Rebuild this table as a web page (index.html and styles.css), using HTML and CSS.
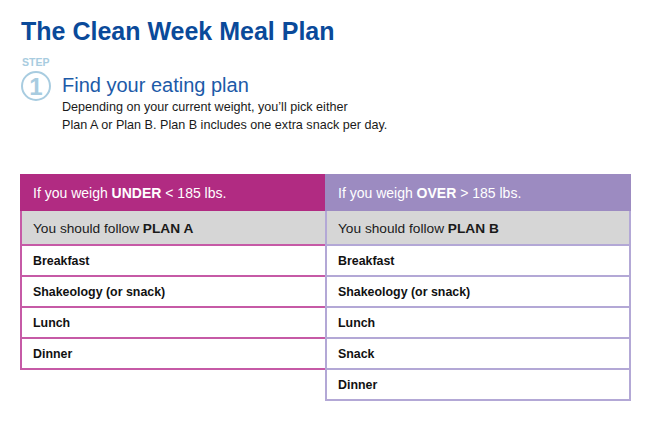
FILE: index.html
```html
<!DOCTYPE html>
<html>
<head>
<meta charset="utf-8">
<link rel="stylesheet" href="styles.css">
</head>
<body>
<div class="page">
  <h1 class="title">The Clean Week Meal Plan</h1>
  <div class="step">
    <div class="step-badge">
      <div class="step-label">STEP</div>
      <div class="step-circle">1</div>
    </div>
    <div class="step-body">
      <h2 class="step-title">Find your eating plan</h2>
      <p class="step-text">Depending on your current weight, you’ll pick either<br>Plan A or Plan B. Plan B includes one extra snack per day.</p>
    </div>
  </div>
  <div class="plans">
    <div class="plan plan-a">
      <div class="plan-head">If you weigh <b>UNDER</b> &lt; 185 lbs.</div>
      <div class="plan-sub">You should follow <b>PLAN A</b></div>
      <div class="plan-row">Breakfast</div>
      <div class="plan-row">Shakeology (or snack)</div>
      <div class="plan-row">Lunch</div>
      <div class="plan-row">Dinner</div>
    </div>
    <div class="plan plan-b">
      <div class="plan-head">If you weigh <b>OVER</b> &gt; 185 lbs.</div>
      <div class="plan-sub">You should follow <b>PLAN B</b></div>
      <div class="plan-row">Breakfast</div>
      <div class="plan-row">Shakeology (or snack)</div>
      <div class="plan-row">Lunch</div>
      <div class="plan-row">Snack</div>
      <div class="plan-row">Dinner</div>
    </div>
  </div>
</div>
</body>
</html>
```
FILE: styles.css
```css
html, body { margin: 0; padding: 0; background: #fff; }
body { font-family: "Liberation Sans", Arial, sans-serif; color: #1a1a1a; }
.page { padding: 17px 0 0 21px; }
.title { margin: 0; font-size: 25px; line-height: 28px; font-weight: bold; color: #0a4a9a; }
.step { display: flex; margin-top: 12px; }
.step-badge { width: 41px; display: flex; flex-direction: column; align-items: flex-start; }
.step-label { font-size: 10.5px; font-weight: bold; color: #a8cce0; line-height: 11px; margin-left: 1px; }
.step-circle { margin-top: 3px; width: 26px; height: 26px; border: 2px solid #a8cce0; border-radius: 50%; color: #a8cce0; font-size: 24px; font-weight: bold; line-height: 27px; text-align: center; }
.step-body { padding-top: 17px; }
.step-title { margin: 0; font-size: 20px; font-weight: normal; color: #1c5aa8; line-height: 23px; }
.step-text { margin: 1px 0 0; font-size: 12.6px; line-height: 18px; color: #1a1a1a; }
.plans { display: flex; align-items: flex-start; margin-top: 40px; margin-left: -1px; }
.plan { box-sizing: border-box; }
.plan-a { width: 305px; border: 2px solid #c65aa6; border-top: 0; border-right: 0; }
.plan-b { width: 306px; border: 2px solid #b3a8d6; border-top: 0; }
.plan-head { height: 35px; padding-top: 2px; line-height: 35px; font-size: 14px; color: #fff; margin: 0 -2px; padding-left: 13px; }
.plan-a .plan-head { background: #b12b82; margin-right: 0; }
.plan-b .plan-head { background: #9c8bc1; }
.plan-sub { height: 31px; padding-top: 2px; line-height: 31px; font-size: 13.7px; background: #d6d6d6; padding-left: 11px; color: #1a1a1a; }
.plan-row { height: 28px; padding-top: 1px; line-height: 28px; font-size: 12.4px; font-weight: bold; padding-left: 11px; border-top: 2px solid; color: #111; }
.plan-a .plan-row { border-top-color: #c65aa6; }
.plan-b .plan-row { border-top-color: #b3a8d6; }
```
